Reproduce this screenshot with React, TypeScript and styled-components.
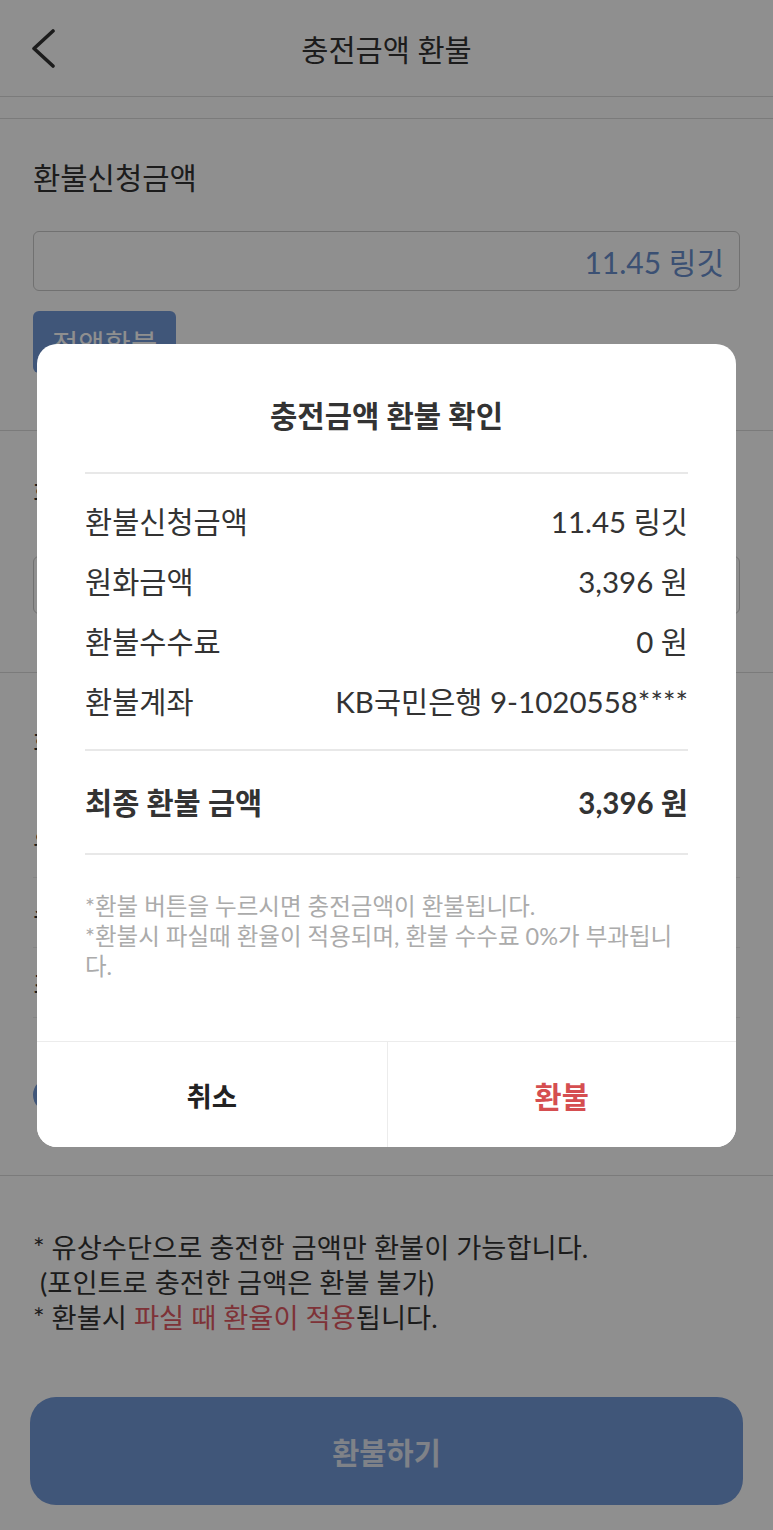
import styled, { createGlobalStyle } from "styled-components";

const GlobalStyle = createGlobalStyle`
  * {
    box-sizing: border-box;
  }

  body {
    margin: 0;
    background: #ffffff;
    font-family: "Lato", "Noto Sans CJK KR", sans-serif;
    color: #333333;
  }
`;

const Page = styled.div`
  position: relative;
  width: 773px;
  height: 1530px;
  overflow: hidden;
  background: #ffffff;
`;

const Header = styled.header`
  display: grid;
  grid-template-columns: 96px 1fr 96px;
  align-items: center;
  height: 97px;
  border-bottom: 1px solid #dcdcdc;
`;

const BackButton = styled.button`
  display: flex;
  align-items: center;
  justify-content: flex-start;
  padding: 0 0 0 29px;
  height: 100%;
  border: none;
  background: none;
`;

const Title = styled.h1`
  margin: 0;
  text-align: center;
  font-size: 29.5px;
  font-weight: 400;
  color: #333333;
`;

const Band = styled.div`
  height: 22px;
  border-bottom: 1px solid #dcdcdc;
`;

const Section = styled.section<{ $top: number; $bottom: number }>`
  display: flex;
  flex-direction: column;
  padding: ${(p) => p.$top}px 33px ${(p) => p.$bottom}px;
  border-bottom: 1px solid #dcdcdc;
`;

const Label = styled.div`
  font-size: 29.7px;
  line-height: 32px;
  color: #333333;
`;

const InputBox = styled.div<{ $gap: number; $height: number }>`
  display: flex;
  align-items: center;
  justify-content: flex-end;
  margin-top: ${(p) => p.$gap}px;
  height: ${(p) => p.$height}px;
  padding: 0 15px;
  border: 1.5px solid #c9c9c9;
  border-radius: 6px;
  font-size: 30px;
  color: #6a8fce;
`;

const FullButton = styled.button`
  align-self: flex-start;
  margin-top: 20px;
  height: 62px;
  padding: 0 19px;
  border: none;
  border-radius: 6px;
  background: #7399d8;
  color: #ffffff;
  font-family: inherit;
  font-size: 28.6px;
`;

const List = styled.div`
  margin-top: 47px;
`;

const ListRow = styled.div`
  display: flex;
  align-items: center;
  height: 70px;
  border-bottom: 1px solid #eeeeee;
  font-size: 29px;
  color: #333333;
`;

const AgreeRow = styled.div`
  display: flex;
  align-items: center;
  margin-top: 42px;
  height: 70px;
`;

const Circle = styled.span`
  width: 34px;
  height: 34px;
  border-radius: 50%;
  background: #7399d8;
`;

const Notice = styled.div`
  padding: 54px 33px 0;
  font-size: 27.3px;
  line-height: 35px;
  color: #333333;
`;

const Red = styled.span`
  color: #e05a63;
`;

const SubmitButton = styled.button`
  display: block;
  margin: 62px 30px 0;
  width: 713px;
  height: 108px;
  border: none;
  border-radius: 26px;
  background: #7399d8;
  color: #e2e8f2;
  font-family: inherit;
  font-size: 29.5px;
  font-weight: 700;
`;

const Overlay = styled.div`
  position: absolute;
  inset: 0;
  display: flex;
  justify-content: center;
  align-items: flex-start;
  padding-top: 344px;
  background: rgba(0, 0, 0, 0.44);
`;

const Modal = styled.div`
  display: flex;
  flex-direction: column;
  width: 699px;
  border-radius: 20px;
  background: #ffffff;
  overflow: hidden;
`;

const ModalBody = styled.div`
  padding: 54px 48px 0;
`;

const ModalTitle = styled.h2`
  margin: 0;
  padding-bottom: 38px;
  border-bottom: 2px solid #e8e8e8;
  text-align: center;
  font-size: 29.7px;
  line-height: 36px;
  font-weight: 700;
  color: #333333;
`;

const Group = styled.div<{ $top: number; $bottom: number }>`
  padding: ${(p) => p.$top}px 0 ${(p) => p.$bottom}px;
  border-bottom: 2px solid #e8e8e8;
`;

const InfoRow = styled.div<{ $bold?: boolean }>`
  display: flex;
  align-items: center;
  justify-content: space-between;
  height: 60px;
  font-size: 29.5px;
  font-weight: ${(p) => (p.$bold ? 700 : 400)};
  color: #333333;
`;

const ModalNote = styled.p`
  margin: 0;
  padding: 36px 0 60px;
  font-size: 23.5px;
  line-height: 30px;
  color: #ababab;
`;

const Footer = styled.div`
  display: grid;
  grid-template-columns: 1fr 1fr;
  height: 106px;
  border-top: 1px solid #ececec;
`;

const FooterButton = styled.button<{ $danger?: boolean }>`
  border: none;
  border-left: ${(p) => (p.$danger ? "1px solid #ececec" : "none")};
  background: #ffffff;
  font-family: inherit;
  font-size: ${(p) => (p.$danger ? "29.5px" : "27.5px")};
  font-weight: 700;
  color: ${(p) => (p.$danger ? "#d54e50" : "#222222")};
`;

const rows = [
  ["환불신청금액", "11.45 링깃"],
  ["원화금액", "3,396 원"],
  ["환불수수료", "0 원"],
  ["환불계좌", "KB국민은행 9-1020558****"],
];

export default function App() {
  return (
    <Page>
      <GlobalStyle />
      <Header>
        <BackButton aria-label="뒤로">
          <svg width="28" height="40" viewBox="0 0 28 40" fill="none">
            <path
              d="M24 3 L5 20.5 L24 38"
              stroke="#333333"
              strokeWidth="3.6"
              strokeLinecap="round"
              strokeLinejoin="round"
            />
          </svg>
        </BackButton>
        <Title>충전금액 환불</Title>
        <span />
      </Header>
      <Band />

      <Section $top={43} $bottom={57}>
        <Label>환불신청금액</Label>
        <InputBox $gap={37} $height={60}>
          11.45 링깃
        </InputBox>
        <FullButton>전액환불</FullButton>
      </Section>

      <Section $top={48} $bottom={58}>
        <Label>환불계좌</Label>
        <InputBox $gap={45} $height={58} />
      </Section>

      <Section $top={56} $bottom={45}>
        <Label>환불 정보</Label>
        <List>
          <ListRow>원화</ListRow>
          <ListRow>수수료</ListRow>
          <ListRow>최종</ListRow>
        </List>
        <AgreeRow>
          <Circle />
        </AgreeRow>
      </Section>

      <Notice>
        * 유상수단으로 충전한 금액만 환불이 가능합니다.
        <br />
        &nbsp;(포인트로 충전한 금액은 환불 불가)
        <br />* 환불시 <Red>파실 때 환율이 적용</Red>됩니다.
      </Notice>

      <SubmitButton>환불하기</SubmitButton>

      <Overlay>
        <Modal>
          <ModalBody>
            <ModalTitle>충전금액 환불 확인</ModalTitle>
            <Group $top={16} $bottom={19}>
              {rows.map(([label, value]) => (
                <InfoRow key={label}>
                  <span>{label}</span>
                  <span>{value}</span>
                </InfoRow>
              ))}
            </Group>
            <Group $top={20} $bottom={22}>
              <InfoRow $bold>
                <span>최종 환불 금액</span>
                <span>3,396 원</span>
              </InfoRow>
            </Group>
            <ModalNote>
              *환불 버튼을 누르시면 충전금액이 환불됩니다.
              <br />
              *환불시 파실때 환율이 적용되며, 환불 수수료 0%가 부과됩니다.
            </ModalNote>
          </ModalBody>
          <Footer>
            <FooterButton>취소</FooterButton>
            <FooterButton $danger>환불</FooterButton>
          </Footer>
        </Modal>
      </Overlay>
    </Page>
  );
}
